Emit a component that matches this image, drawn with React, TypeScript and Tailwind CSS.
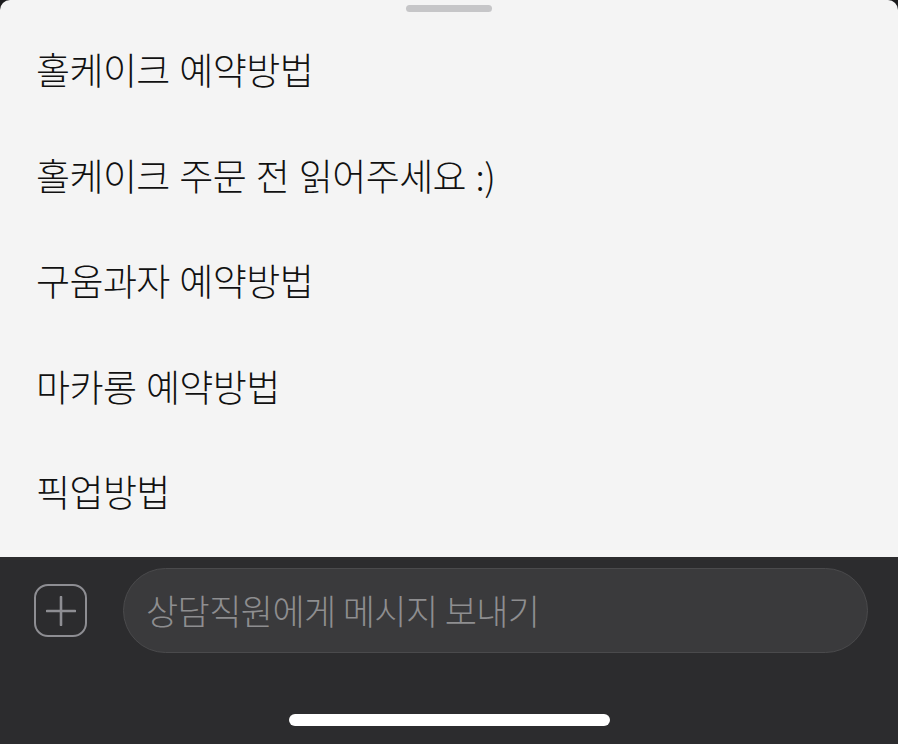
import React from "react";

const items = [
  "홀케이크 예약방법",
  "홀케이크 주문 전 읽어주세요 :)",
  "구움과자 예약방법",
  "마카롱 예약방법",
  "픽업방법",
];

const font = { fontFamily: '"Noto Sans CJK KR", "Noto Sans", sans-serif' };

export default function App() {
  return (
    <div className="w-[898px] h-[744px] bg-[#1c1c1e] flex flex-col overflow-hidden" style={font}>
      <div className="h-[557px] bg-[#f4f4f4] rounded-t-[10px] flex flex-col items-center">
        <div className="mt-[5px] w-[86px] h-[7px] rounded-full bg-[#c6c6c8]" />
        <div className="mt-[5px] w-full flex flex-col">
          {items.map((t) => (
            <div key={t} className="h-[105.5px] flex items-center pl-[36px]">
              <span className="text-[37px] font-light leading-none text-[#111111] tracking-[-0.6px] [word-spacing:2px]">{t}</span>
            </div>
          ))}
        </div>
      </div>
      <div className="flex-1 bg-[#2c2c2e] flex flex-col">
        <div className="flex items-center pt-[11px] pl-[34px] pr-[30px] gap-[36px]">
          <div className="w-[53px] h-[53px] rounded-[14px] border-[2.5px] border-[#8e8e93] flex items-center justify-center shrink-0">
            <svg width="30" height="30" viewBox="0 0 30 30">
              <path d="M15 1v28M1 15h28" stroke="#8e8e93" strokeWidth="2.6" strokeLinecap="round" />
            </svg>
          </div>
          <div className="flex-1 h-[85px] rounded-full bg-[#3a3a3c] border-[1.5px] border-[#4a4a4c] flex items-center pl-[22px] pb-[2px]">
            <span className="text-[35px] font-light leading-none text-[#8e8e90] tracking-[-0.6px]">상담직원에게 메시지 보내기</span>
          </div>
        </div>
        <div className="flex-1 flex items-end justify-center pb-[18px]">
          <div className="w-[321px] h-[12px] rounded-full bg-white" />
        </div>
      </div>
    </div>
  );
}
